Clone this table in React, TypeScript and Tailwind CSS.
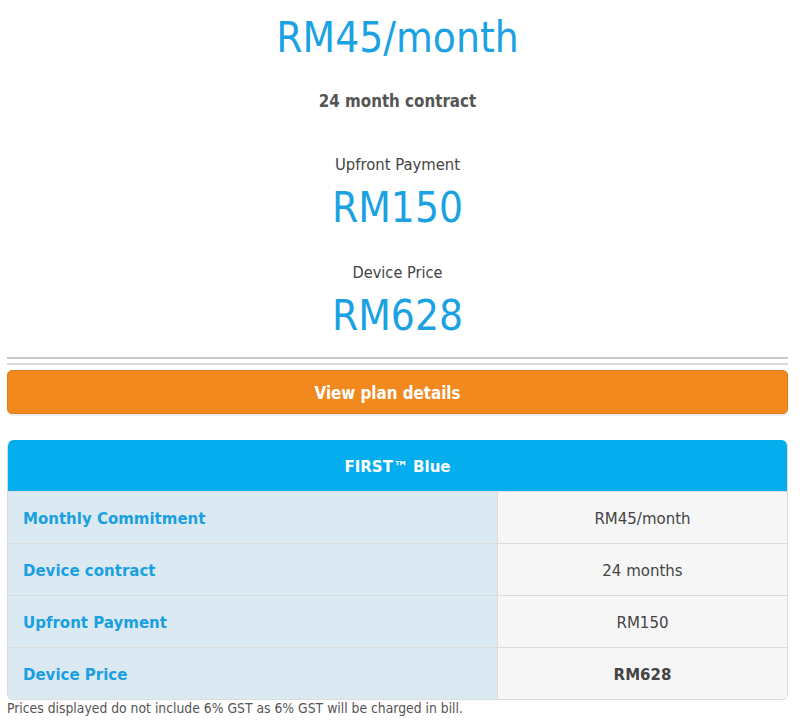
import React from "react";

const cond = "font-['DejaVu_Sans_Condensed','DejaVu_Sans',sans-serif] [font-stretch:condensed]";
const reg = "font-['DejaVu_Sans','Verdana',sans-serif]";

const rows: { label: string; value: string; bold?: boolean }[] = [
  { label: "Monthly Commitment", value: "RM45/month" },
  { label: "Device contract", value: "24 months" },
  { label: "Upfront Payment", value: "RM150" },
  { label: "Device Price", value: "RM628", bold: true },
];

export default function App() {
  return (
    <div className="w-[800px] h-[722px] bg-white overflow-hidden pl-[7px] pr-[12px]">
      <div className={`flex flex-col items-center pt-[13px] ${cond}`}>
        <div className="text-[42px] leading-[50px] text-[#1ba2e3]">RM45/month</div>
        <div className="mt-[28px] text-[16.8px] leading-[20px] font-bold text-[#555555]">24 month contract</div>
        <div className="mt-[44px] text-[16.5px] leading-[20px] text-[#444444]">Upfront Payment</div>
        <div className="mt-[8px] text-[42px] leading-[50px] text-[#1ba2e3]">RM150</div>
        <div className="mt-[30px] text-[16.2px] leading-[20px] text-[#444444]">Device Price</div>
        <div className="mt-[8px] text-[42px] leading-[50px] text-[#1ba2e3]">RM628</div>
      </div>

      <div className="mt-[16px] h-[8px] border-t-2 border-b-2 border-t-[#c8c8c8] border-b-[#d9d9d9]" />

      <div
        className={`mt-[5px] h-[44px] rounded-[5px] bg-[#f2891f] border border-[#e27c17] shadow-[0_2px_0_#ececec] flex items-center justify-center pr-[20px] pt-[3px] text-white font-bold text-[16.8px] ${cond}`}
      >
        View plan details
      </div>

      <div className={`mt-[26px] rounded-[6px] border border-t-0 border-[#dcdcdc] overflow-hidden ${reg}`}>
        <div className="h-[51px] bg-[#03adee] rounded-t-[5px] flex items-center justify-center pt-[3px] text-white font-bold text-[15px]">
          FIRST™ Blue
        </div>
        {rows.map((r) => (
          <div key={r.label} className="h-[52px] border-t border-[#dcdcdc] flex">
            <div className="w-[489px] bg-[#dbe9f2] flex items-center pl-[15px] pt-[3px] text-[15px] font-bold text-[#1a9fe0]">
              {r.label}
            </div>
            <div
              className={`flex-1 bg-[#f6f6f6] border-l border-[#dcdcdc] flex items-center justify-center pt-[3px] text-[15px] text-[#444444] ${
                r.bold ? "font-bold" : ""
              }`}
            >
              {r.value}
            </div>
          </div>
        ))}
      </div>

      <div className={`text-[13.8px] leading-[16px] text-[#555555] ${cond}`}>
        Prices displayed do not include 6% GST as 6% GST will be charged in bill.
      </div>
    </div>
  );
}
